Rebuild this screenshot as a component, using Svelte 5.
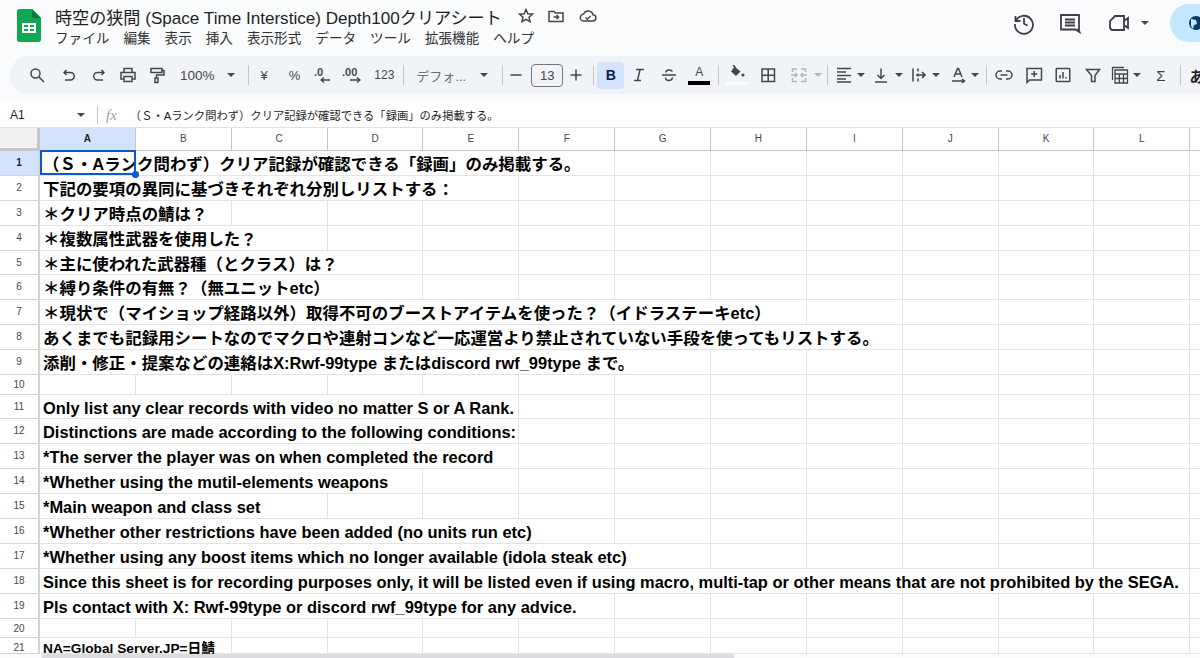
<script>
  const colNames = ["A","B","C","D","E","F","G","H","I","J","K","L",""];
  const menu = ["ファイル","編集","表示","挿入","表示形式","データ","ツール","拡張機能","ヘルプ"];
  // span = how many columns the overflowing text covers
  const rows = [
    { n: 1, text: "（Ｓ・Aランク問わず）クリア記録が確認できる「録画」のみ掲載する。", span: 6 },
    { n: 2, text: "下記の要項の異同に基づきそれぞれ分別しリストする：", span: 5 },
    { n: 3, text: "＊クリア時点の鯖は？", span: 2 },
    { n: 4, text: "＊複数属性武器を使用した？", span: 3 },
    { n: 5, text: "＊主に使われた武器種（とクラス）は？", span: 4 },
    { n: 6, text: "＊縛り条件の有無？（無ユニットetc）", span: 4 },
    { n: 7, text: "＊現状で（マイショップ経路以外）取得不可のブーストアイテムを使った？（イドラステーキetc）", span: 8 },
    { n: 8, text: "あくまでも記録用シートなのでマクロや連射コンなど一応運営より禁止されていない手段を使ってもリストする。", span: 9 },
    { n: 9, text: "添削・修正・提案などの連絡はX:Rwf-99type またはdiscord rwf_99type まで。", span: 7 },
    { n: 10, text: "", span: 1, short: true },
    { n: 11, text: "Only list any clear records with video no matter S or A Rank.", span: 5 },
    { n: 12, text: "Distinctions are made according to the following conditions:", span: 5 },
    { n: 13, text: "*The server the player was on when completed the record", span: 5 },
    { n: 14, text: "*Whether using the mutil-elements weapons", span: 4 },
    { n: 15, text: "*Main weapon and class set", span: 3 },
    { n: 16, text: "*Whether other restrictions have been added (no units run etc)", span: 6 },
    { n: 17, text: "*Whether using any boost items which no longer available (idola steak etc)", span: 7 },
    { n: 18, text: "Since this sheet is for recording purposes only, it will be listed even if using macro, multi-tap or other means that are not prohibited by the SEGA.", span: 12 },
    { n: 19, text: "Pls contact with X: Rwf-99type or discord rwf_99type for any advice.", span: 6 },
    { n: 20, text: "", span: 1, short: true },
    { n: 21, text: "NA=Global Server.JP=日鯖", span: 2, last: true }
  ];
  const COL = 95.86;
</script>

<div class="page">
  <header class="top">
    <svg class="logo" viewBox="0 0 24 33" width="24" height="33">
      <path d="M2.500 0H15l9 9v21.500a2.500 2.500 0 0 1-2.500 2.500h-19A2.500 2.500 0 0 1 0 30.500v-28A2.500 2.500 0 0 1 2.500 0z" fill="#11a651"/>
      <path d="M15 0l9 9h-9z" fill="#0c7a3c"/>
      <path d="M5 14h14v10H5z M7 16v2h4v-2z M13 16v2h4v-2z M7 20v2h4v-2z M13 20v2h4v-2z" fill="#fff" fill-rule="evenodd"/>
    </svg>
    <div class="titles">
      <div class="title-row">
        <span class="title">時空の狭間 (Space Time Interstice) Depth100クリアシート</span>
        <svg class="ic m15" viewBox="0 0 18 18"><path d="M9 2.500l1.900 4.300 4.600.4-3.500 3 1.100 4.500L9 12.300l-4.100 2.400L6 10.200l-3.500-3 4.600-.4z"/></svg>
        <svg class="ic m12" viewBox="0 0 18 18"><path d="M2 4.500h5l1.500 1.500H16v8.500H2z M6.500 10h5 M9.500 8l2 2-2 2"/></svg>
        <svg class="ic m14" viewBox="0 0 18 18"><path d="M5 14a3.500 3.500 0 0 1-.4-7A5 5 0 0 1 14 7.800a3.100 3.100 0 0 1-.5 6.200z M6.500 10.500l1.800 1.700 3.200-3.200"/></svg>
      </div>
      <nav class="menu">
        {#each menu as m}
          <span>{m}</span>
        {/each}
      </nav>
    </div>
    <div class="top-right">
      <svg class="big" viewBox="0 0 24 24"><path d="M3.500 5v5h5 M3.800 10A9 9 0 1 1 3 13 M12 7v5.500l3.500 2.200"/></svg>
      <svg class="big" viewBox="0 0 24 24"><path d="M3 4h18v14.500h-.5l1 2.500-4-2.500H3z M7 8.500h10 M7 11.500h10 M7 14.500h10"/></svg>
      <div class="meet">
        <svg class="big" viewBox="0 0 24 24"><path d="M8 5h9v14H6a3 3 0 0 1-3-2.500V10z M17 10l4-3v10l-4-3"/></svg>
        <i class="caret"></i>
      </div>
      <div class="share">
        <svg viewBox="0 0 30 38" width="30" height="38"><circle cx="26" cy="19" r="7" fill="#0b3a66" stroke="none"/><path d="M21 15l5 1 1 4-3 1-1 4-2-3z" fill="#c2e7ff" stroke="none"/></svg>
      </div>
    </div>
  </header>

  <div class="toolbar">
    <svg class="t" viewBox="0 0 18 18"><circle cx="7.500" cy="7.500" r="4.500"/><path d="M11 11l5 5"/></svg>
    <svg class="t m14" viewBox="0 0 18 18"><path d="M6.500 4l-2.500 2.500L6.500 9 M4 6.500h6.500a3.500 3.500 0 0 1 0 7.500H5"/></svg>
    <svg class="t m12" viewBox="0 0 18 18"><path d="M11.500 4l2.500 2.500L11.500 9 M14 6.500H7.500a3.700 3.700 0 0 0 0 7.500H13"/></svg>
    <svg class="t m11" viewBox="0 0 18 18"><path d="M5 6V2.500h8V6 M5 13H2V6.500h14V13h-3 M5 10.500h8v5H5z"/></svg>
    <svg class="t m11" viewBox="0 0 18 18"><path d="M3 2.500h11v4H3z M14 4.500h2v4.500H8.500v3 M7 12h3v4.500H7z"/></svg>
    <span class="zoom m14">100%</span><i class="caret m12"></i>
    <i class="sep m13"></i>
    <span class="tx m12">¥</span>
    <span class="tx m21">%</span>
    <svg class="t dec m13" viewBox="0 0 20 18"><text x="1" y="10" font-size="11" font-weight="700">.0</text><path d="M17 14H8 M11 11.500L8 14l3 2.500"/></svg>
    <svg class="t dec2 m9" viewBox="0 0 22 18"><text x="0" y="10" font-size="11" font-weight="700">.00</text><path d="M8 14h10 M15 11.500l3 2.500-3 2.500"/></svg>
    <span class="tx n123 m10">123</span>
    <i class="sep m9"></i>
    <span class="font m12">デフォ...</span><i class="caret m14"></i>
    <i class="sep m14"></i>
    <svg class="t m4" viewBox="0 0 18 18"><path d="M3.500 9h11"/></svg>
    <span class="size m6">13</span>
    <svg class="t m4" viewBox="0 0 18 18"><path d="M3.500 9h11 M9 3.500v11"/></svg>
    <i class="sep m8"></i>
    <span class="bold m3">B</span>
    <svg class="t m6" viewBox="0 0 18 18"><path d="M6 3.500h8 M10 3.500L7.500 14.500 M4 14.500h7" /></svg>
    <svg class="t m12" viewBox="0 0 18 18"><path d="M2 9h14 M12.500 5.500A3.500 2.500 0 0 0 5.800 6.500 M5.500 11.500a3.500 3 0 0 0 7 0"/></svg>
    <span class="color m10">A<b></b></span>
    <i class="sep m8"></i>
    <span class="fill m7">
      <svg viewBox="0 0 18 14"><path d="M6.500 1.500l6 5-4.500 4.500-5-4.500z" fill="#444746" stroke="none"/><path d="M5 0l2.500 2.500" /><circle cx="15" cy="10" r="1.600" fill="#444746" stroke="none"/></svg>
      <b></b>
    </span>
    <svg class="t m11" viewBox="0 0 18 18"><path d="M3 3h12.500v12.500H3z M9.200 3v12.500 M3 9.200h12.500"/></svg>
    <svg class="t merge m13" viewBox="0 0 18 18"><path d="M7 3H2.500v3 M2.500 12v3.500H7 M11 3h4.500v3 M15.500 12v3.500H11 M1 9h5.500 M5 7l2 2-2 2 M17 9h-5.500 M13 7l-2 2 2 2"/></svg>
    <i class="caret mc m6"></i>
    <i class="sep m5"></i>
    <svg class="t thin m7" viewBox="0 0 18 18"><path d="M2 2.500h14 M2 6h9 M2 9.500h14 M2 13h9 M2 16h14"/></svg><i class="caret m4"></i>
    <svg class="t m7" viewBox="0 0 18 18"><path d="M3 16h12 M9 2.500v10 M5.500 9L9 12.500 12.500 9"/></svg><i class="caret m5"></i>
    <svg class="t m7" viewBox="0 0 18 18"><path d="M3 2.500v13 M8 2.500v3 M8 7.500v3 M8 12.500v3 M6 9h9 M12 6l3 3-3 3"/></svg><i class="caret m4"></i>
    <svg class="t m9" viewBox="0 0 18 18"><path d="M5 11l3.500-8.500h1L13 11 M6 8h6.500 M3 15h12 M13 13l2.500 2-2.500 2"/></svg><i class="caret m4"></i>
    <i class="sep m7"></i>
    <svg class="t m8" viewBox="0 0 18 18"><path d="M7 5H5a4 4 0 0 0 0 8h2 M11 5h2a4 4 0 0 1 0 8h-2 M5.500 9h7"/></svg>
    <svg class="t m12" viewBox="0 0 18 18"><path d="M2 2.500h14.500v11.500H4.500L2 16.500z M9.200 5v6 M6.200 8h6"/></svg>
    <svg class="t m11" viewBox="0 0 18 18"><path d="M3 2.500h12a.8.8 0 0 1 .8.8v11.500a.8.8 0 0 1-.8.8H3a.8.8 0 0 1-.8-.8V3.300a.8.8 0 0 1 .8-.8z M6 9v3.500 M9 6v6.500 M12 11v1.500"/></svg>
    <svg class="t m12" viewBox="0 0 18 18"><path d="M2.500 3.500h13L11 9.500v6H7.500v-6z"/></svg>
    <svg class="t thin m9" viewBox="0 0 18 18"><path d="M13 1.500H1.500V14 M4 4h12.500v13H4z M4 8h12.500 M4 12.500h12.500 M8.300 8v9 M12.500 8v9"/></svg><i class="caret m4"></i>
    <span class="tx sigma m15">Σ</span>
    <i class="sep m15"></i>
    <span class="tx kana m8">あ</span>
  </div>

  <div class="formula">
    <span class="ref">A1</span><i class="caret"></i>
    <i class="sep fsep m12"></i>
    <span class="fx">fx</span>
    <span class="ftext">（Ｓ・Aランク問わず）クリア記録が確認できる「録画」のみ掲載する。</span>
  </div>

  <div class="sheet">
    <div class="head-row">
      <div class="corner"></div>
      {#each colNames as c, i}
        <div class="col-head" class:active={i === 0} style="width:{COL}px">{c}</div>
      {/each}
    </div>
    {#each rows as r}
      <div class="row" class:short={r.short} class:last={r.last}>
        <div class="row-head" class:active={r.n === 1}>{r.n}</div>
        <div class="cell" style="width:{r.span * COL}px">
          {r.text}
          {#if r.n === 1}<i class="sel" style="width:{COL}px"></i><i class="handle"></i>{/if}
        </div>
        {#each colNames.slice(r.span) as c}
          <div class="cell" style="width:{COL}px"></div>
        {/each}
      </div>
    {/each}
  </div>
  <div class="hscroll"></div>
</div>

<style>
  :global(body) {
    margin: 0;
    overflow: hidden;
    background: #fff;
  }
  .page {
    position: relative;
    width: 1200px;
    height: 658px;
    overflow: hidden;
    font-family: "Liberation Sans", "Noto Sans CJK JP", sans-serif;
    color: #1f1f1f;
    background: #f9fbfd;
  }
  svg { fill: none; stroke: #444746; stroke-width: 1.500; flex: none; }

  /* toolbar and title spacing */
  .m3 { margin-left: 3px; }
  .m4 { margin-left: 4px; }
  .m5 { margin-left: 5px; }
  .m6 { margin-left: 6px; }
  .m7 { margin-left: 7px; }
  .m8 { margin-left: 8px; }
  .m9 { margin-left: 9px; }
  .m10 { margin-left: 10px; }
  .m11 { margin-left: 11px; }
  .m12 { margin-left: 12px; }
  .m13 { margin-left: 13px; }
  .m14 { margin-left: 14px; }
  .m15 { margin-left: 15px; }
  .m21 { margin-left: 21px; }

  .top { height: 56px; display: flex; padding-left: 17px; }
  .logo { stroke: none; margin-top: 9px; }
  .titles { margin-left: 14px; }
  .title-row { display: flex; align-items: center; height: 30px; margin-top: 1px; margin-bottom: 1px; }
  .title { font-size: 17.100px; white-space: nowrap; }
  .ic { width: 18px; height: 18px; }
  .menu { display: flex; gap: 14px; font-size: 13.600px; line-height: 13px; color: #333; }
  .top-right { margin-left: auto; display: flex; align-items: flex-start; padding-top: 11px; }
  .big { width: 24px; height: 24px; margin-right: 22px; stroke-width: 1.800; stroke: #3c4043; }
  .meet { display: flex; align-items: center; height: 24px; margin-left: 3px; }
  .meet .big { margin-right: 10px; }
  .meet .caret { margin-right: 21px; }
  .share { width: 30px; height: 38px; margin-top: -7px; background: #c2e7ff; border-radius: 19px 0 0 19px; overflow: hidden; }
  .share svg { display: block; }

  .caret {
    display: inline-block;
    flex: none;
    width: 0;
    height: 0;
    border-left: 4px solid transparent;
    border-right: 4px solid transparent;
    border-top: 4px solid #444746;
  }

  .toolbar {
    height: 38px;
    margin-left: 10px;
    padding-left: 18px;
    background: #f0f4f9;
    border-radius: 19px 0 0 19px;
    display: flex;
    align-items: center;
    white-space: nowrap;
    overflow: hidden;
  }
  .toolbar > * { flex: none; }
  .t { width: 18px; height: 18px; }
  .t.thin { stroke-width: 1.300; }
  .zoom { font-size: 13.500px; color: #444746; }
  .sep { flex: none; width: 1px; height: 20px; background: #c7c7c7; }
  .tx { font-size: 13px; color: #444746; }
  .t.dec { width: 20px; stroke-width: 1.300; }
  .t.dec2 { width: 22px; stroke-width: 1.300; }
  .t text { fill: #444746; stroke: none; font-family: "Liberation Sans", sans-serif; }
  .n123 { font-size: 12px; }
  .font { font-size: 13px; color: #6b6e70; }
  .size {
    width: 30px;
    height: 21px;
    border: 1px solid #747775;
    border-radius: 4px;
    font-size: 13px;
    line-height: 21px;
    text-align: center;
    color: #444746;
  }
  .bold {
    width: 27px;
    height: 27px;
    background: #d3e3fd;
    border-radius: 4px;
    color: #041e49;
    font-weight: 700;
    font-size: 14px;
    line-height: 27px;
    text-align: center;
  }
  .color {
    width: 22px;
    font-size: 12px;
    text-align: center;
    color: #444746;
    line-height: 13px;
  }
  .color b { display: block; height: 4px; background: #000; margin-top: 2px; }
  .fill { width: 22px; }
  .fill svg { display: block; width: 18px; height: 14px; margin: 0 auto 3px; }
  .fill b { display: block; height: 3px; background: #fff; }
  .t.merge { stroke: #b4b6b8; }
  .caret.mc { border-top-color: #b4b6b8; }
  .sigma { font-size: 15px; }
  .kana { font-size: 15px; color: #1f1f1f; font-weight: 700; }

  .formula {
    height: 26px;
    margin-top: 8px;
    background: #fff;
    display: flex;
    align-items: center;
    font-size: 12px;
  }
  .ref { width: 77px; padding-left: 10px; box-sizing: border-box; color: #1f1f1f; }
  .sep.fsep { height: 18px; }
  .fx { font-family: "Liberation Serif", serif; font-style: italic; font-size: 15px; color: #9aa0a6; margin-left: 8px; }
  .ftext { margin-left: 13px; color: #1f1f1f; font-size: 11.300px; white-space: nowrap; }

  .sheet { background: #fff; }
  .head-row { display: flex; height: 23px; box-shadow: 0 -1px 0 #e1e1e1; }
  .corner { width: 40px; flex: none; background: #f1f1f1; border-right: 3px solid #c4c7c5; border-bottom: 3px solid #c4c7c5; box-sizing: border-box; }
  .col-head {
    flex: none;
    box-sizing: border-box;
    border-right: 1px solid #c4c7c5;
    border-bottom: 1px solid #c4c7c5;
    font-size: 10px;
    line-height: 22px;
    text-align: center;
    color: #444746;
  }
  .col-head.active { background: #d3e3fd; font-weight: 700; color: #1f1f1f; }
  .row { display: flex; height: 24.900px; }
  .row.short { height: 19.500px; }
  .row.last { height: 16px; }
  .row-head {
    width: 40px;
    flex: none;
    box-sizing: border-box;
    border-right: 2px solid #d4d4d4;
    border-bottom: 1px solid #d4d4d4;
    font-size: 10px;
    line-height: 24px;
    text-align: center;
    color: #444746;
  }
  .row.short .row-head { line-height: 19px; }
  .row.last .row-head { line-height: 20px; }
  .row-head.active { background: #d3e3fd; font-weight: 700; color: #1f1f1f; }
  .cell {
    position: relative;
    flex: none;
    box-sizing: border-box;
    border-right: 1px solid #e3e3e3;
    border-bottom: 1px solid #e3e3e3;
    padding-left: 3px;
    font-size: 16.450px;
    font-weight: 700;
    line-height: 26px;
    color: #000;
    white-space: nowrap;
  }
  .row.last .cell { font-size: 13.700px; line-height: 21px; }
  .sel {
    position: absolute;
    left: 0;
    top: -1px;
    height: 25px;
    box-sizing: border-box;
    border: 2px solid #0b57d0;
    pointer-events: none;
  }
  .handle {
    position: absolute;
    left: 92px;
    top: 20px;
    width: 7px;
    height: 7px;
    border-radius: 50%;
    background: #0b57d0;
  }
  .hscroll {
    position: absolute;
    left: 42px;
    top: 654px;
    width: 692px;
    height: 4px;
    background: #dadce0;
    border-radius: 2px 2px 0 0;
  }
</style>
